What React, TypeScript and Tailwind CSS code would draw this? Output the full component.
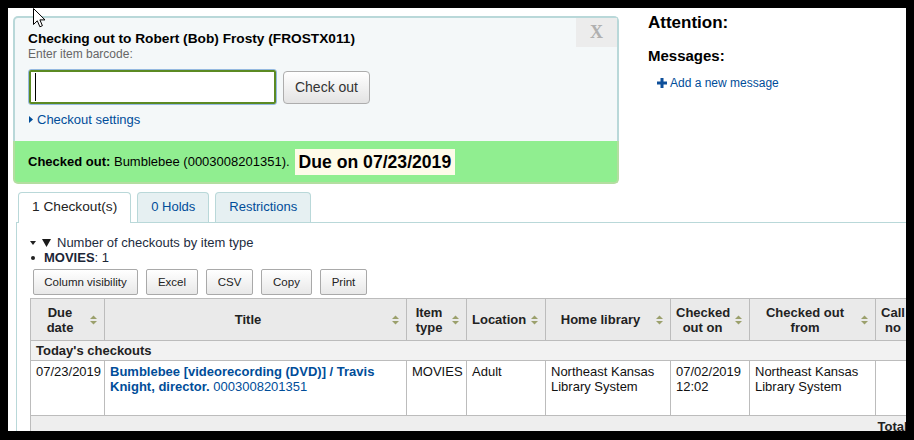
import React from "react";

function SortIcon() {
  return (
    <svg
      width="7"
      height="10"
      viewBox="0 0 7 10"
      className="absolute right-[7px] top-1/2 -translate-y-1/2"
    >
      <polygon points="0,4 3.5,0.5 7,4" fill="#9ba06c" />
      <polygon points="0,6 3.5,9.5 7,6" fill="#9ba06c" />
    </svg>
  );
}

function Th({ children }: { children: React.ReactNode }) {
  return (
    <th className="relative border border-[#bcbcbc] bg-[#eaeaea] pl-[5px] pr-[20px] py-[5px] text-center align-middle font-bold leading-[15px] text-[#222]">
      {children}
      <SortIcon />
    </th>
  );
}

function Td({ children, className = "" }: { children?: React.ReactNode; className?: string }) {
  return (
    <td className={`border border-[#bcbcbc] px-[5px] pt-[3px] align-top leading-[15px] ${className}`}>
      {children}
    </td>
  );
}

export default function App() {
  return (
    <div className="w-[914px] h-[440px] bg-black pt-[8px] pl-[8px] pr-[8px] pb-[9px] font-['Liberation_Sans',Arial,sans-serif]">
      <div className="relative w-full h-full bg-white overflow-hidden flex flex-col text-black">
        {/* mouse cursor */}
        <svg
          width="13"
          height="20"
          viewBox="0 0 13 20"
          className="absolute left-[25px] top-0 z-20"
        >
          <path
            d="M0.5 0.5 L0.5 16.5 L4.3 12.8 L6.9 18.8 L9.4 17.7 L6.9 11.9 L12 11.9 Z"
            fill="#fff"
            stroke="#000"
            strokeWidth="1"
          />
        </svg>

        {/* top section */}
        <div className="flex items-start pl-[5px]">
          <div className="mt-[8px] w-[606px] flex flex-col">
            <div className="relative rounded-t-[5px] border-2 border-b-0 border-[#b9d8d9] bg-[#f4f8f9] pl-[13px] pt-[13px] pb-[14px]">
              <div className="absolute top-0 right-0 w-[41px] h-[29px] bg-[#ececec] flex items-center justify-center font-['Liberation_Serif',serif] font-bold text-[18px] text-[#b0b0b0]">
                X
              </div>
              <div className="text-[13.7px] leading-[16px] font-bold">
                Checking out to Robert (Bob) Frosty (FROSTX011)
              </div>
              <div className="text-[12px] leading-[14px] text-[#666]">Enter item barcode:</div>
              <div className="mt-[8px] flex items-center gap-[6px]">
                <div className="w-[249px] h-[36px] rounded-[3px] border border-[#94b9e0]">
                  <div className="w-full h-full rounded-[2px] border-2 border-[#5b8a23] bg-white flex items-center pl-[4px]">
                    <div className="w-[1px] h-[28px] bg-black" />
                  </div>
                </div>
                <div className="w-[87px] h-[33px] rounded-[4px] border border-[#adadad] bg-linear-to-b from-white to-[#e3e3e3] flex items-center justify-center text-[14px] text-[#333]">
                  Check out
                </div>
              </div>
              <div className="mt-[7px] flex items-center text-[13px] leading-[15px] text-[#004d99]">
                <svg width="4" height="7" viewBox="0 0 4 7" className="ml-[1px]">
                  <polygon points="0,0 4,3.5 0,7" fill="#004d99" />
                </svg>
                <span className="ml-[4px]">Checkout settings</span>
              </div>
            </div>
            <div className="h-[43px] rounded-b-[5px] border-2 border-t-0 border-[#b3dea0] bg-[#90ee90] flex items-center pl-[13px] text-[13px] leading-[15px]">
              <span className="font-bold">Checked out:</span>
              <span>&nbsp;Bumblebee (0003008201351).</span>
              <span className="ml-[5px] bg-[#fefbe9] px-[4px] py-[3px] text-[17.6px] leading-[20px] font-bold">
                Due on 07/23/2019
              </span>
            </div>
          </div>

          <div className="ml-[29px] mt-[5px] flex flex-col">
            <div className="text-[17px] leading-[20px] font-bold">Attention:</div>
            <div className="mt-[14px] text-[15px] leading-[18px] font-bold">Messages:</div>
            <div className="mt-[11px] ml-[9px] flex items-center text-[12px] leading-[14px] text-[#004d99]">
              <svg width="10" height="10" viewBox="0 0 10 10">
                <rect x="3.5" y="0" width="3" height="10" fill="#0d4f9a" />
                <rect x="0" y="3.5" width="10" height="3" fill="#0d4f9a" />
              </svg>
              <span className="ml-[3px]">Add a new message</span>
            </div>
          </div>
        </div>

        {/* tabs */}
        <div className="ml-[8px] mt-[8px] flex-1 min-h-0 flex flex-col">
          <div className="flex items-end gap-[6px] pl-[2px]">
            <div className="relative z-10 -mb-[1px] h-[31px] rounded-t-[4px] border border-b-0 border-[#b9d8d9] bg-white px-[13px] pt-[6px] text-[13.7px] leading-[15px] text-[#222]">
              1 Checkout(s)
            </div>
            <div className="h-[30px] rounded-t-[4px] border border-b-0 border-[#b9d8d9] bg-[#e6f0f2] px-[13px] pt-[6px] text-[13px] leading-[15px] text-[#004d99]">
              0 Holds
            </div>
            <div className="h-[30px] rounded-t-[4px] border border-b-0 border-[#b9d8d9] bg-[#e6f0f2] px-[13px] pt-[6px] text-[13px] leading-[15px] text-[#004d99]">
              Restrictions
            </div>
          </div>
          <div className="flex-1 border-l border-t border-[#b9d8d9] pl-[13px] pt-[12px] text-[13px] leading-[15px]">
            <div className="flex items-center text-[#1c2c40]">
              <svg width="6" height="4" viewBox="0 0 6 4">
                <polygon points="0,0 6,0 3,4" fill="#222" />
              </svg>
              <svg width="9" height="8" viewBox="0 0 9 8" className="ml-[6px]">
                <polygon points="0,0 9,0 4.5,8" fill="#1a1a1a" />
              </svg>
              <span className="ml-[6px]">Number of checkouts by item type</span>
            </div>
            <div className="flex items-center text-[#1c2636]">
              <div className="ml-[1px] w-[4px] h-[4px] rounded-full bg-[#222]" />
              <span className="ml-[9px]">
                <b>MOVIES</b>: 1
              </span>
            </div>
            <div className="mt-[4px] ml-[3px] flex gap-[8px]">
              {[
                ["Column visibility", "w-[105px]"],
                ["Excel", "w-[52px]"],
                ["CSV", "w-[47px]"],
                ["Copy", "w-[51px]"],
                ["Print", "w-[47px]"],
              ].map(([label, w]) => (
                <div
                  key={label}
                  className={`${w} h-[26px] rounded-[2px] border border-[#a9a9a9] bg-linear-to-b from-white to-[#e8e8e8] flex items-center justify-center text-[11.5px] text-[#222]`}
                >
                  {label}
                </div>
              ))}
            </div>

            <table className="mt-[3px] w-[895px] table-fixed border-collapse text-[13px] leading-[15px]">
              <colgroup>
                <col className="w-[74px]" />
                <col className="w-[302px]" />
                <col className="w-[60px]" />
                <col className="w-[79px]" />
                <col className="w-[125px]" />
                <col className="w-[79px]" />
                <col className="w-[126px]" />
                <col className="w-[50px]" />
              </colgroup>
              <thead>
                <tr className="h-[42px]">
                  <Th>Due date</Th>
                  <Th>Title</Th>
                  <Th>Item type</Th>
                  <Th>Location</Th>
                  <Th>Home library</Th>
                  <Th>Checked out on</Th>
                  <Th>Checked out from</Th>
                  <Th>Call no</Th>
                </tr>
              </thead>
              <tbody>
                <tr className="h-[20px]">
                  <td
                    colSpan={8}
                    className="border border-[#bcbcbc] bg-[#f2f2f2] px-[5px] py-[2px] font-bold leading-[15px] text-[#222]"
                  >
                    Today's checkouts
                  </td>
                </tr>
                <tr className="h-[55px] bg-white text-[#111]">
                  <Td>07/23/2019</Td>
                  <Td className="text-[#004d99]">
                    <b>Bumblebee [videorecording (DVD)] / Travis Knight, director.</b> 0003008201351
                  </Td>
                  <Td>MOVIES</Td>
                  <Td>Adult</Td>
                  <Td>Northeast Kansas Library System</Td>
                  <Td>07/02/2019 12:02</Td>
                  <Td>Northeast Kansas Library System</Td>
                  <Td></Td>
                </tr>
              </tbody>
              <tfoot>
                <tr className="bg-[#eeeeee]">
                  <td colSpan={7} className="border-l border-[#bcbcbc] h-[20px]" />
                  <td className="pl-[2px] pt-[3px] align-top font-bold leading-[15px] text-[#222] whitespace-nowrap">
                    Total
                  </td>
                </tr>
              </tfoot>
            </table>
          </div>
        </div>
      </div>
    </div>
  );
}
